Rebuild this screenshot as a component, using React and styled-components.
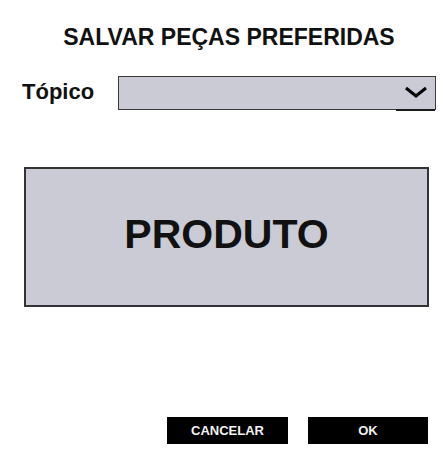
import React from "react";
import styled, { createGlobalStyle } from "styled-components";

const GlobalStyle = createGlobalStyle`
  body {
    margin: 0;
    background: #ffffff;
    font-family: "Liberation Sans", Arial, sans-serif;
  }
`;

const Page = styled.div`
  width: 443px;
  height: 456px;
  box-sizing: border-box;
  padding: 26px 7px 0 22px;
  display: flex;
  flex-direction: column;
  color: #111;
`;

const Title = styled.h1`
  margin: 0;
  font-size: 23px;
  line-height: 1;
  font-weight: bold;
  text-align: center;
`;

const TopicRow = styled.div`
  margin-top: 27px;
  display: flex;
  align-items: center;
  gap: 24px;
`;

const Label = styled.label`
  font-size: 22px;
  font-weight: bold;
  line-height: 1;
  margin-top: -2px;
`;

const Select = styled.div`
  flex: 1;
  height: 34px;
  box-sizing: border-box;
  background: #cbcbd6;
  border: 1px solid #3a3a3a;
  display: flex;
  justify-content: flex-end;
  align-items: stretch;
`;

const Chevron = styled.div`
  width: 39px;
  padding-bottom: 2px;
  box-sizing: border-box;
  display: flex;
  align-items: center;
  justify-content: center;
  box-shadow: 0 2px 0 0 #1a1a1a;
`;

const ProductBox = styled.div`
  margin: 57px 0 0 2px;
  width: 405px;
  height: 140px;
  box-sizing: border-box;
  padding-bottom: 6px;
  background: #cbcbd6;
  border: 2px solid #333;
  display: flex;
  align-items: center;
  justify-content: center;
  font-size: 41px;
  font-weight: bold;
`;

const Actions = styled.div`
  margin-top: 110px;
  margin-right: 8px;
  display: flex;
  justify-content: flex-end;
  gap: 20px;
`;

const Button = styled.button`
  width: ${(p) => p.w}px;
  height: 27px;
  background: #000;
  color: #f2f2f2;
  border: none;
  padding: 0;
  font-family: "Liberation Sans", Arial, sans-serif;
  font-size: 13px;
  font-weight: bold;
  line-height: 1;
`;

export default function App() {
  return (
    <>
      <GlobalStyle />
      <Page>
        <Title>SALVAR PEÇAS PREFERIDAS</Title>
        <TopicRow>
          <Label>Tópico</Label>
          <Select>
            <Chevron>
              <svg width="24" height="12" viewBox="0 0 24 12">
                <path d="M2 2 L12 10 L22 2" fill="none" stroke="#000" strokeWidth="3" />
              </svg>
            </Chevron>
          </Select>
        </TopicRow>
        <ProductBox>PRODUTO</ProductBox>
        <Actions>
          <Button w={121}>CANCELAR</Button>
          <Button w={120}>OK</Button>
        </Actions>
      </Page>
    </>
  );
}
